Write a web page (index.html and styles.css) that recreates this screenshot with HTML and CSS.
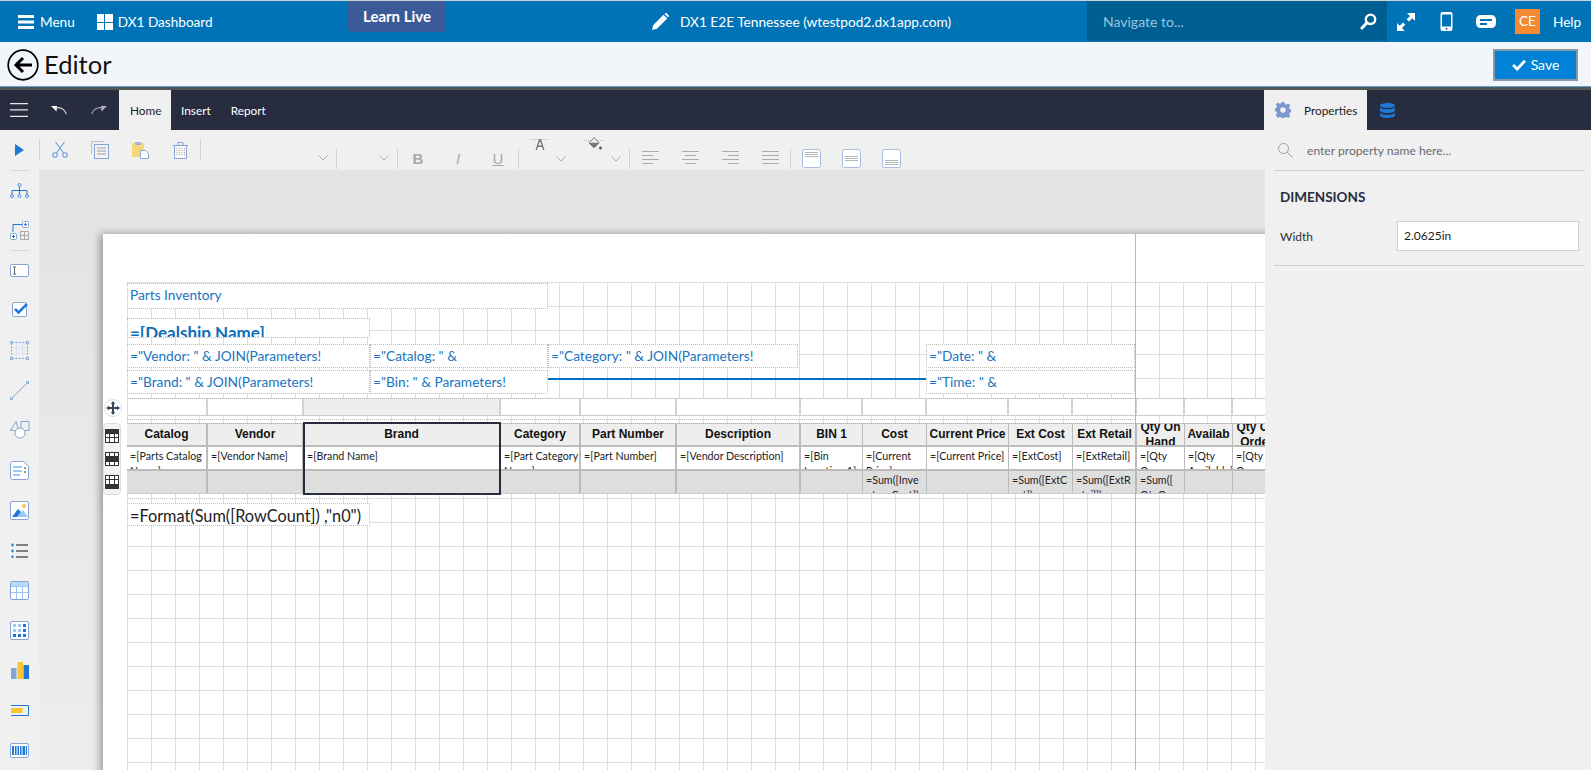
FILE: index.html
```html
<!DOCTYPE html>
<html lang="en">
<head>
<meta charset="utf-8">
<title>Editor</title>
<link rel="stylesheet" href="styles.css">
</head>
<body>
<div class="app">
  <header class="topbar">
    <div class="top-left">
      <svg class="ic-menu" width="16" height="14" viewBox="0 0 16 14"><path fill="#fff" d="M0 0h16v3H0zM0 5.500h16v3H0zM0 11h16v3H0z"/></svg>
      <span class="menu-label">Menu</span>
      <svg class="ic-win" width="16" height="16" viewBox="0 0 16 16"><path fill="#fff" d="M0 0h7v8H0zM8 0h8v8H8zM0 9h7v7H0zM8 9h8v7H8z"/></svg>
      <span class="dash-label">DX1 Dashboard</span>
    </div>
    <div class="learn">Learn Live</div>
    <div class="top-title">
      <svg width="17" height="17" viewBox="0 0 17 17"><path fill="#fff" d="M0 17l1.300-5L11.500 1.800l3.700 3.700L5 15.700zM12.500.8l.6-.5c.5-.4 1.200-.4 1.600 0l1.900 1.900c.4.500.4 1.200 0 1.600l-.5.700z"/></svg>
      <span>DX1 E2E Tennessee (wtestpod2.dx1app.com)</span>
    </div>
    <div class="nav-search">
      <span>Navigate to...</span>
      <svg width="17" height="17" viewBox="0 0 17 17"><circle cx="10.500" cy="6.300" r="4.700" fill="none" stroke="#fff" stroke-width="2.400"/><path stroke="#fff" stroke-width="3" stroke-linecap="round" d="M6.800 10L2 15"/></svg>
    </div>
    <div class="top-right">
      <svg width="18" height="18" viewBox="0 0 18 18"><path fill="#fff" d="M10 0h8v8l-2.700-2.700-3.300 3.300-2.300-2.300 3.300-3.300zM0 18v-8l2.700 2.700L6 9.400l2.300 2.300L5 15l2.700 3z"/></svg>
      <svg class="ic-phone" width="13" height="19" viewBox="0 0 12 19"><rect width="12" height="19" rx="2" fill="#fff"/><rect x="1.500" y="2.500" width="9" height="12" fill="#0073b7"/><circle cx="6" cy="16.800" r="1" fill="#0073b7"/></svg>
      <svg class="ic-chat" width="20" height="16" viewBox="0 0 20 16"><path fill="#fff" d="M5 1h10c3 0 5 2 5 5v3c0 3-2 5-5 5H5c-3 0-5-2-5-5V6c0-3 2-5 5-5z"/><path stroke="#0073b7" stroke-width="2" d="M4 6h12M4 10h7"/></svg>
      <span class="avatar">CE</span>
      <span class="help">Help</span>
    </div>
  </header>

  <div class="titlebar">
    <svg class="ic-back" width="32" height="32" viewBox="0 0 32 32"><circle cx="16" cy="16" r="14.800" fill="none" stroke="#000" stroke-width="1.700"/><path fill="none" stroke="#000" stroke-width="3" d="M25 16H9M16 9l-7 7 7 7"/></svg>
    <h1>Editor</h1>
    <button class="save"><svg width="14" height="12" viewBox="0 0 13 11"><path fill="none" stroke="#fff" stroke-width="2.600" d="M1 5.500l3.800 3.800L12 1.500"/></svg>Save</button>
  </div>

  <nav class="ribbon">
    <svg class="ic-ham" width="18" height="14" viewBox="0 0 18 14"><path fill="#e8e8e8" d="M0 0h18v1.300H0zM0 6.300h18v1.300H0zM0 12.700h18V14H0z"/></svg>
    <svg class="ic-undo" width="16" height="9" viewBox="0 0 16 9"><path fill="#fff" d="M0 0h6L5.500 5.500z"/><path fill="none" stroke="#d8d8d8" stroke-width="1.100" d="M3.500 2.500C8 .5 13 2 15.300 8"/></svg>
    <svg class="ic-redo" width="16" height="9" viewBox="0 0 16 9"><path fill="#b4b7bf" d="M16 0h-6l.5 5.500z"/><path fill="none" stroke="#9fa3ad" stroke-width="1.100" d="M12.500 2.500C8 .5 3 2 .7 8"/></svg>
    <span class="tab active home">Home</span>
    <span class="tab">Insert</span>
    <span class="tab">Report</span>
    <span class="ribbon-gap"></span>
    <span class="tab active props">
      <svg width="16" height="16" viewBox="0 0 16 16"><path fill="#7b97cf" fill-rule="evenodd" d="M6.500 0h3l.4 2.200 1.400.6L13.200 1.500l2.100 2.100-1.300 1.900.6 1.400 1.400.4v3l-1.400.4-.6 1.400 1.300 1.900-2.100 2.100-1.900-1.300-1.400.6-.4 2.100h-3l-.4-2.100-1.400-.6-1.900 1.300L.7 12.900 2 11l-.6-1.400L0 9.200V6.400l1.400-.5L2 4.500.7 2.600 2.800.5l1.900 1.300 1.400-.6zM8 5.200a2.800 2.800 0 1 0 0 5.600 2.800 2.800 0 0 0 0-5.600z"/></svg>
      <span>Properties</span>
    </span>
    <svg class="ic-db" width="15" height="15" viewBox="0 0 15 15"><path fill="#1f78d6" d="M0 2.500C0 1 3.400 0 7.500 0S15 1 15 2.500 11.600 5 7.500 5 0 4 0 2.500zM0 4.500C2 6 5 6.300 7.500 6.300S13 6 15 4.500v3C15 9 11.600 10 7.500 10S0 9 0 7.500zM0 10c2 1.500 5 1.700 7.500 1.700S13 11.500 15 10v2.500C15 14 11.600 15 7.500 15S0 14 0 12.500z"/></svg>
  </nav>

  <div class="work">
    <div class="work-left">
      <div class="toolbar">
        <span class="tool first"><svg width="9" height="12" viewBox="0 0 9 12"><path fill="#1f78d6" d="M0 0l9 6-9 6z"/></svg></span>
        <span class="tsep up"></span>
        <span class="tool"><svg width="16" height="16" viewBox="0 0 16 16" fill="none" stroke="#6f9fdc" stroke-width="1.100"><circle cx="3" cy="13" r="2.200"/><circle cx="13" cy="13" r="2.200"/><path d="M4.300 11.300L12.500 0M11.700 11.300L3.500 0"/></svg></span>
        <span class="tool"><svg width="18" height="18" viewBox="0 0 18 18" fill="none"><path stroke="#a9c2e6" d="M.5 13V.5H13"/><rect x="3.500" y="3.500" width="14" height="14" fill="#f4f4f4" stroke="#86a4d6"/><path stroke="#999" d="M6 7h9M6 10h9M6 13h9"/></svg></span>
        <span class="tool"><svg width="17" height="18" viewBox="0 0 17 18"><path fill="#f5d77c" d="M0 2h12v14H0z"/><path fill="#9fb6dc" d="M3 1h6v3H3z"/><path fill="#fff" stroke="#8ba8d8" d="M8.500 9.500h5l3 3v5h-8z"/></svg></span>
        <span class="tool"><svg width="15" height="17" viewBox="0 0 15 17" fill="none"><path stroke="#86a4d6" d="M0 3.500h15M5 3V.5h5V3"/><path stroke="#86a4d6" fill="#f8f8f8" d="M1.500 3.500h12v13h-12z"/><path stroke="#aaa" stroke-dasharray="1 1" d="M4 6v8M6.500 6v8M9 6v8M11.500 6v8"/></svg></span>
        <span class="tsep up"></span>
        <span class="combo combo-font"><svg class="chev" width="10" height="6" viewBox="0 0 10 6"><path fill="none" stroke="#a8a8a8" d="M.5.500L5 5 9.500.5"/></svg></span>
        <span class="tsep"></span>
        <span class="combo combo-size"><svg class="chev" width="10" height="6" viewBox="0 0 10 6"><path fill="none" stroke="#a8a8a8" d="M.5.500L5 5 9.500.5"/></svg></span>
        <span class="tsep"></span>
        <span class="tool fmt b">B</span>
        <span class="tool fmt i">I</span>
        <span class="tool fmt u">U</span>
        <span class="tsep"></span>
        <span class="color color-a">
          <svg width="18" height="12" viewBox="0 0 18 12"><path stroke="#bbb" stroke-dasharray="1 1" d="M0 1.500h18" fill="none"/><path fill="#777" d="M8 1h2l3.500 11H12l-.8-3H6.800L6 12H4.500zM7.300 7.500h3.400L9 3z"/></svg>
          <svg class="chev" width="10" height="6" viewBox="0 0 10 6"><path fill="none" stroke="#a8a8a8" d="M.5.500L5 5 9.500.5"/></svg>
        </span>
        <span class="color color-f">
          <svg width="20" height="13" viewBox="0 0 20 13"><path stroke="#bbb" stroke-dasharray="1 1" d="M0 3.500h20" fill="none"/><path fill="#f0f0f0" stroke="#777" d="M10 .7l5 5-5 5-5-5z"/><path fill="#777" d="M4.700 5.700h10.600L10 11z"/><circle cx="16.500" cy="11" r="1.500" fill="#555"/></svg>
          <svg class="chev" width="10" height="6" viewBox="0 0 10 6"><path fill="none" stroke="#a8a8a8" d="M.5.500L5 5 9.500.5"/></svg>
        </span>
        <span class="tsep"></span>
        <span class="tool low"><svg width="17" height="14" viewBox="0 0 17 14"><path stroke="#aaa" d="M0 .5h17M0 4.500h11M0 8.500h17M0 12.500h11"/></svg></span>
        <span class="tool low"><svg width="17" height="14" viewBox="0 0 17 14"><path stroke="#aaa" d="M0 .5h17M3 4.500h11M0 8.500h17M3 12.500h11"/></svg></span>
        <span class="tool low"><svg width="17" height="14" viewBox="0 0 17 14"><path stroke="#aaa" d="M0 .5h17M6 4.500h11M0 8.500h17M6 12.500h11"/></svg></span>
        <span class="tool low"><svg width="17" height="14" viewBox="0 0 17 14"><path stroke="#aaa" d="M0 .5h17M0 4.500h17M0 8.500h17M0 12.500h17"/></svg></span>
        <span class="tsep"></span>
        <span class="tool low box"><svg width="19" height="19" viewBox="0 0 19 19" fill="none"><rect x=".5" y=".5" width="18" height="18" rx="2" fill="#fff" stroke="#a9bbe0"/><path stroke="#b5b5b5" d="M3 3.500h13M3 5.500h13M3 7.500h13"/></svg></span>
        <span class="tool low box"><svg width="19" height="19" viewBox="0 0 19 19" fill="none"><rect x=".5" y=".5" width="18" height="18" rx="2" fill="#fff" stroke="#a9bbe0"/><path stroke="#b5b5b5" d="M3 7.500h13M3 9.500h13M3 11.500h13"/></svg></span>
        <span class="tool low box"><svg width="19" height="19" viewBox="0 0 19 19" fill="none"><rect x=".5" y=".5" width="18" height="18" rx="2" fill="#fff" stroke="#a9bbe0"/><path stroke="#b5b5b5" d="M3 11.500h13M3 13.500h13M3 15.500h13"/></svg></span>
      </div>
      <div class="stage">
        <aside class="side">
          <span class="side-item top-a"><svg width="19" height="15" viewBox="0 0 19 15" fill="none" stroke="#4b8fdc"><circle cx="9.500" cy="2" r="1.500"/><circle cx="2" cy="13" r="1.500"/><circle cx="9.500" cy="13" r="1.500"/><circle cx="17" cy="13" r="1.500"/><path stroke="#1f78d6" d="M9.500 3.500v8M2 11.500V7.500h15v4"/></svg></span>
          <span class="side-item"><svg width="19" height="19" viewBox="0 0 19 19" fill="none"><path stroke="#1f78d6" d="M3 11V3.500h9"/><rect x="12.500" y=".5" width="6" height="6" rx="1" fill="#fff" stroke="#86a4d6"/><path stroke="#1f78d6" d="M14 3.500h3M15.500 2v3"/><rect x=".5" y="12.500" width="6" height="6" rx="1" fill="#fff" stroke="#86a4d6"/><path stroke="#1f78d6" d="M2 15.500h3M3.500 14v3"/><path stroke="#aaa" d="M10.500 10.500h8v8h-8zM14.500 10.500v8M10.500 14.500h8"/></svg></span>
          <span class="side-rule"></span>
          <span class="side-item"><svg width="19" height="13" viewBox="0 0 19 13" fill="none"><rect x=".5" y=".5" width="18" height="12" rx="1.500" fill="#fff" stroke="#86a4d6"/><path stroke="#666" d="M3 3h3M3 10h3M4.500 3v7"/></svg></span>
          <span class="side-item"><svg width="16" height="16" viewBox="0 0 16 16" fill="none"><rect x=".5" y=".5" width="14" height="14" rx="1.500" fill="#fff" stroke="#86a4d6"/><path stroke="#1f78d6" stroke-width="2.500" d="M3 7l3.500 3.500L15 2"/></svg></span>
          <span class="side-item"><svg width="19" height="19" viewBox="0 0 19 19" fill="none"><path stroke="#dbe3f2" d="M6.500 2v15M12.500 2v15M2 6.500h15M2 12.500h15"/><path stroke="#86a4d6" stroke-dasharray="2 1.300" d="M2 1.500h15M2 17.500h15M1.500 2v15M17.500 2v15"/><path fill="#fff" stroke="#86a4d6" d="M.5.500h2v2h-2zM16.500.5h2v2h-2zM.5 16.500h2v2h-2zM16.500 16.500h2v2h-2z"/></svg></span>
          <span class="side-item"><svg width="19" height="19" viewBox="0 0 19 19" fill="none" stroke="#86a4d6"><path d="M2.500 16.500l14-14"/><path fill="#fff" d="M.5 16.500h2v2h-2zM16.500.5h2v2h-2z"/></svg></span>
          <span class="side-item"><svg width="20" height="18" viewBox="0 0 20 18" fill="none" stroke="#86a4d6"><path d="M6 .5L.5 9.500h8zM11 .5h8v9h-8z"/><circle cx="10" cy="12" r="5" fill="#fff"/></svg></span>
          <span class="side-item"><svg width="19" height="19" viewBox="0 0 19 19"><path fill="#fff" stroke="#86a4d6" d="M.5 2.500a2 2 0 0 1 2-2h11l5 5v11a2 2 0 0 1-2 2h-14a2 2 0 0 1-2-2z"/><path fill="#9cc8f5" d="M3 5h9v2H3zM3 9h9v2H3z"/><path fill="#999" d="M14 6h2v2h-2zM14 10h2v2h-2z"/><path fill="#9cc8f5" d="M3 13h7v2H3z"/></svg></span>
          <span class="side-item"><svg width="19" height="19" viewBox="0 0 19 19"><rect x=".5" y=".5" width="18" height="18" rx="1.500" fill="#fff" stroke="#86a4d6"/><circle cx="14" cy="5" r="2" fill="#f4c542"/><path fill="#9cc8f5" d="M7 16l6-7 5 7z"/><path fill="#1f78d6" d="M2 16l6-8 3 3-4 5z"/></svg></span>
          <span class="side-item"><svg width="18" height="15" viewBox="0 0 18 15"><path fill="#808080" d="M5 1h12v2H5zM5 7h12v2H5zM5 13h12v2H5z"/><path fill="#2a82e4" d="M1.500 0L3 2 1.500 3.800 0 2zM1.500 6L3 8 1.500 9.800 0 8zM1.500 12L3 14 1.500 15.800 0 14z"/></svg></span>
          <span class="side-item"><svg width="19" height="19" viewBox="0 0 19 19"><rect x=".5" y=".5" width="18" height="18" rx="1.500" fill="#fff" stroke="#86a4d6"/><path fill="#b7dafb" d="M1 1h17v4H1z"/><path stroke="#9cc8f5" fill="none" d="M1 5.500h17M1 11.500h17M6.500 5v13M12.500 5v13"/></svg></span>
          <span class="side-item"><svg width="19" height="19" viewBox="0 0 19 19"><rect x=".5" y=".5" width="18" height="18" rx="1.500" fill="#fff" stroke="#86a4d6"/><path fill="#9cc8f5" d="M3 3h3v3H3zM8 3h3v3H8zM3 8h3v3H3zM8 8h3v3H8z"/><path fill="#1f78d6" d="M13 3h3v3h-3zM13 8h3v3h-3zM3 13h3v3H3zM8 13h3v3H8zM13 13h3v3h-3z"/></svg></span>
          <span class="side-item"><svg width="18" height="17" viewBox="0 0 18 17"><path fill="#86a4d6" d="M0 6h5.500v11H0z"/><path fill="#f6c431" d="M6.500 0H12v17H6.500z"/><path fill="#1f78d6" d="M12.500 3H18v14h-5.500z"/></svg></span>
          <span class="side-item"><svg width="18" height="11" viewBox="0 0 18 11"><path fill="none" stroke="#1f78d6" d="M0 .5h17.500v10H0"/><path fill="#f6c431" d="M0 3h11.500v5H0z"/></svg></span>
          <span class="side-item"><svg width="19" height="15" viewBox="0 0 19 15"><rect x=".5" y=".5" width="18" height="14" rx="1.500" fill="#fff" stroke="#86a4d6"/><path fill="#1f78d6" d="M2 3h2v9H2zM5 3h1.500v9H5zM7.500 3H9v9H7.500zM10 3h1.500v9H10zM12.500 3H15v9h-2.500zM15.800 3H17v9h-1.200z"/></svg></span>
        </aside>
        <main class="canvas">
          <div class="page">
            <div class="report">
              <div class="item title-item">Parts Inventory</div>
              <div class="item dealer">=[Dealship Name]</div>
              <div class="item vendor">="Vendor: " &amp; JOIN(Parameters!</div>
              <div class="item catalog">="Catalog: " &amp;</div>
              <div class="item category">="Category: " &amp; JOIN(Parameters!</div>
              <div class="item date">="Date: " &amp;</div>
              <div class="item brand">="Brand: " &amp; JOIN(Parameters!</div>
              <div class="item bin">="Bin: " &amp; Parameters!</div>
              <div class="rule-line"></div>
              <div class="item time">="Time: " &amp;</div>
              <div class="stray">=</div>

              <div class="tcols handles">
                <span></span><span></span><span class="on"></span><span></span><span></span><span></span><span></span><span></span><span></span><span></span><span></span><span></span><span></span><span></span>
              </div>
              <div class="dots"></div>

              <div class="tablebox">
                <div class="tcols row head">
                  <span>Catalog</span><span>Vendor</span><span>Brand</span><span>Category</span><span>Part Number</span><span>Description</span><span>BIN 1</span><span>Cost</span><span>Current Price</span><span>Ext Cost</span><span>Ext Retail</span><span class="wrap">Qty On Hand</span><span>Availab</span><span class="wrap">Qty On Order</span>
                </div>
                <div class="tcols row data">
                  <span>=[Parts Catalog Name]</span><span>=[Vendor Name]</span><span>=[Brand Name]</span><span>=[Part Category Name]</span><span>=[Part Number]</span><span>=[Vendor Description]</span><span>=[Bin Location 1]</span><span>=[Current Price]</span><span>=[Current Price]</span><span>=[ExtCost]</span><span>=[ExtRetail]</span><span>=[Qty On Hand]</span><span>=[Qty Available]</span><span>=[Qty On Order]</span>
                </div>
                <div class="tcols row total">
                  <span></span><span></span><span></span><span></span><span></span><span></span><span></span><span>=Sum([InventoryCost])</span><span></span><span>=Sum([ExtCost])</span><span>=Sum([ExtRetail])</span><span>=Sum([QtyOnHand])</span><span></span><span></span>
                </div>
                <div class="selected"></div>
              </div>

              <div class="item count">=Format(Sum([RowCount]) ,"n0")</div>

              <div class="grip move">
                <svg width="14" height="14" viewBox="0 0 14 14"><path fill="#34455e" d="M7 0l2.200 3H8v3h3V4.800L14 7l-3 2.200V8H8v3h1.200L7 14l-2.200-3H6V8H3v1.200L0 7l3-2.200V6h3V3H4.800z"/></svg>
              </div>
              <div class="grip-pill">
                <svg width="14" height="14" viewBox="0 0 14 14"><rect width="14" height="14" fill="#333"/><path fill="#fff" d="M1 5h3v3H1zM5 5h4v3H5zM10 5h3v3h-3zM1 9h3v4H1zM5 9h4v4H5zM10 9h3v4h-3z"/></svg>
                <svg width="14" height="14" viewBox="0 0 14 14"><rect width="14" height="14" fill="#333"/><path fill="#fff" d="M1 1h3v3H1zM5 1h4v3H5zM10 1h3v3h-3zM1 10h3v3H1zM5 10h4v3H5zM10 10h3v3h-3z"/></svg>
                <svg width="14" height="14" viewBox="0 0 14 14"><rect width="14" height="14" fill="#333"/><path fill="#fff" d="M1 1h3v3H1zM5 1h4v3H5zM10 1h3v3h-3zM1 5h3v4H1zM5 5h4v4H5zM10 5h3v4h-3z"/></svg>
              </div>
            </div>
            <div class="page-edge"></div>
          </div>
        </main>
      </div>
    </div>

    <aside class="panel">
      <div class="prop-search">
        <svg width="15" height="15" viewBox="0 0 15 15" fill="none" stroke="#a0a0a0"><circle cx="5.500" cy="5.500" r="5"/><path d="M9 9l5.500 5.500"/></svg>
        <span>enter property name here...</span>
      </div>
      <div class="prop-group">
        <h2>DIMENSIONS</h2>
        <div class="prop-row">
          <label>Width</label>
          <div class="prop-input">2.0625in</div>
        </div>
      </div>
    </aside>
  </div>
</div>
</body>
</html>
```

FILE: styles.css
```css
* { box-sizing: border-box; }
html, body { margin: 0; padding: 0; height: 100%; overflow: hidden; }
body { font-family: "Lato", "Open Sans", sans-serif; background: #f0f0f0; color: #222; }
svg { display: block; flex: none; }
.app { width: 1591px; height: 770px; display: flex; flex-direction: column; overflow: hidden; }

/* top bar */
.topbar { height: 42px; flex: none; background: #0073b7; border-top: 1px solid #c9d3d8; display: flex; align-items: center; color: #fff; font-size: 13.600px; position: relative; }
.top-left { display: flex; align-items: center; padding-left: 18px; width: 640px; }
.menu-label { margin-left: 6px; }
.ic-win { margin-left: 22px; }
.dash-label { margin-left: 5px; }
.learn { position: absolute; left: 348px; top: 0; width: 98px; height: 31px; background: #3d5a98; border-radius: 0 0 4px 4px; font-weight: 700; font-size: 15px; text-align: center; line-height: 30px; }
.top-title { display: flex; align-items: center; gap: 11px; padding-left: 12px; width: 447px; font-size: 13.700px; }
.nav-search { width: 300px; height: 40px; align-self: flex-start; background: #005f92; display: flex; align-items: center; justify-content: space-between; padding: 0 10px 0 16px; color: #9cc4dc; font-size: 14px; }
.top-right { display: flex; align-items: center; padding-left: 10px; }
.ic-phone { margin-left: 25px; }
.ic-chat { margin-left: 23px; }
.avatar { margin-left: 19px; width: 25px; height: 25px; background: #f58a33; text-align: center; line-height: 25px; font-size: 13.500px; }
.help { margin-left: 13px; }

/* title bar */
.titlebar { height: 48px; flex: none; background: #f2f6fa; border-bottom: 3px solid #555; box-shadow: inset 0 -1px 0 #5a9fd0; display: flex; align-items: center; padding: 0 13px 0 7px; }
.titlebar h1 { font-weight: 400; font-size: 25.500px; margin: 0 0 2px 5px; color: #111; flex: 1; }
.save { width: 85px; height: 32px; border: 2px solid #8b98a3; background: #0082d6; color: #fff; font: 14px "Lato", sans-serif; display: flex; align-items: center; justify-content: center; gap: 5px; padding: 0; }

/* ribbon */
.ribbon { height: 40px; flex: none; background: #272c3f; display: flex; align-items: center; color: #fff; font-size: 11.800px; }
.ic-ham { margin-left: 10px; }
.ic-undo { margin-left: 23px; }
.ic-redo { margin-left: 24px; }
.tab { height: 40px; display: flex; align-items: center; padding: 0 10px; }
.tab.active { background: #f0f0f0; color: #222; }
.home { margin-left: 12px; width: 52px; padding: 0 11px; }
.ribbon-gap { flex: 1; }
.props { width: 103px; padding: 0 0 0 11px; gap: 13px; margin-right: 13px; }
.ic-db { margin-right: 196px; }

/* work area */
.work { flex: 1; display: flex; min-height: 0; }
.work-left { flex: 1; min-width: 0; display: flex; flex-direction: column; }
.toolbar { height: 40px; flex: none; background: #f0f0f0; display: flex; align-items: flex-start; }
.tool { width: 40px; height: 40px; display: flex; align-items: center; justify-content: center; }
.tool.first { width: 39px; }
.tool.low { align-items: flex-end; padding-bottom: 5px; }
.tool.box { padding-bottom: 2px; }
.fmt { font: 15px "Liberation Sans", sans-serif; color: #a8a8a8; padding-top: 17px; }
.fmt.b { font-weight: 700; }
.fmt.i { font-style: italic; }
.fmt.u { text-decoration: underline; }
.tsep { width: 1px; height: 20px; margin-top: 19px; background: #d0d0d0; flex: none; }
.tsep.up { margin-top: 10px; }
.combo { height: 40px; display: flex; align-items: flex-end; justify-content: flex-end; padding: 0 8px 9px 0; }
.combo-font { width: 135px; }
.combo-size { width: 60px; }
.color { width: 55px; height: 40px; position: relative; display: block; }
.color svg { position: absolute; }
.color svg:first-child { left: 12px; top: 8px; }
.color .chev { left: 37px; top: 26px; }
.color-f svg:first-child { left: 10px; top: 7px; }

/* stage */
.stage { flex: 1; display: flex; min-height: 0; }
.side { width: 39px; flex: none; background: #f0f0f0; display: flex; flex-direction: column; align-items: center; }
.side-item { height: 40px; flex: none; display: flex; align-items: center; justify-content: center; }
.side-item.top-a { border-top: 1px solid #d8d8d8; width: 20px; }
.side-rule { width: 20px; height: 1px; background: #d8d8d8; flex: none; margin-bottom: -1px; }
.canvas { flex: 1; min-width: 0; overflow: hidden; background: linear-gradient(#e3e3e3, #ededed); padding: 64px 0 0 64px; }
.page { width: 1400px; height: 800px; background: #fff; box-shadow: -3px 0 8px rgba(0,0,0,.35); position: relative; }
.page-edge { position: absolute; left: 1032px; top: 0; bottom: 0; width: 1px; background: #b8b8b8; }

/* report */
.report { position: absolute; left: 24px; top: 48px; right: 0; bottom: 0; border-top: 1px solid #ddd; background-image: linear-gradient(to right, #ddd 1px, transparent 1px), linear-gradient(to bottom, #ddd 1px, transparent 1px); background-size: 24px 24px; background-position: 0 -1px; }
.item { position: absolute; background: #fff; border: 1px dotted #bdbdbd; color: #1874c0; font-size: 13.700px; line-height: 22px; padding: 0 0 0 2px; overflow: hidden; white-space: nowrap; }
.title-item { left: 0; top: 0; width: 421px; height: 26px; }
.dealer { left: 0; top: 35px; width: 243px; height: 20px; font-weight: 700; font-size: 17px; line-height: 28px; color: #0c6cb8; }
.vendor { left: 0; top: 61px; width: 243px; height: 24px; }
.catalog { left: 243px; top: 61px; width: 178px; height: 24px; }
.category { left: 421px; top: 61px; width: 250px; height: 24px; }
.date { left: 799px; top: 61px; width: 209px; height: 24px; }
.brand { left: 0; top: 87px; width: 243px; height: 24px; }
.bin { left: 243px; top: 87px; width: 178px; height: 24px; }
.time { left: 799px; top: 87px; width: 209px; height: 24px; }
.rule-line { position: absolute; left: 421px; top: 95px; width: 378px; height: 2px; background: #0070c0; }
.stray { position: absolute; left: 3px; top: 112px; width: 8px; height: 2px; font-size: 14px; line-height: 6px; color: #333; overflow: hidden; }
.tcols { display: grid; grid-template-columns: 81px 96px 197px 80px 96px 124px 62px 64px 82px 64px 64px 48px 48px 48px; }
.handles { position: absolute; left: 0; top: 115px; height: 18px; border: 1px solid #ccc; border-left: 0; border-radius: 3px 0 0 3px; background: #fff; }
.handles span { border-right: 2px solid #d2d2d2; }
.handles span:first-child { border-left: 1px solid #ddd; }
.handles .on { background: #eee; }
.dots { position: absolute; left: 0; top: 136px; width: 1008px; border-top: 1px dotted #bbb; }
.tablebox { position: absolute; left: 0; top: 140px; }
.row { font-size: 10.700px; color: #222; }
.row span { overflow: hidden; border-right: 1px solid #bbb; padding: 1px 0 0 3px; line-height: 15px; }
.row span:nth-child(-n+6) { border-right-width: 2px; }
.row span:nth-child(n+8) { padding-right: 3px; }
.row span:nth-child(n+12) { padding-right: 5px; }
.row.head { height: 24px; border-top: 1px solid #c0c0c0; border-bottom: 2px solid #bbb; background: #eee; font: 700 12px/21px "Liberation Sans", sans-serif; color: #111; text-align: center; }
.row.head span { padding: 0 1px; line-height: 21px; white-space: nowrap; }
.row.head .wrap { white-space: normal; line-height: 15px; display: flex; align-items: center; justify-content: center; }
.row.data { height: 24px; border-bottom: 2px solid #bbb; background: #fff; }
.row.total { height: 23px; background: #dedede; border-bottom: 1px solid #ccc; }
.row.total span { overflow-wrap: anywhere; }
.selected { position: absolute; left: 176px; top: -1px; width: 198px; height: 73px; border: 2px solid #272c3f; }
.count { left: 0; top: 220px; width: 243px; height: 23px; font-size: 16.300px; line-height: 24px; color: #222; }
.grip { position: absolute; left: -23px; top: 116px; width: 18px; height: 18px; border-radius: 50%; background: #fff; border: 1px solid #ddd; display: flex; align-items: center; justify-content: center; }
.grip-pill { position: absolute; left: -24px; top: 140px; width: 18px; height: 72px; background: #f3f3f3; border: 1px solid #ddd; border-radius: 4px; display: flex; flex-direction: column; align-items: center; justify-content: space-around; }

/* right panel */
.panel { width: 326px; flex: none; background: #f0f0f0; padding: 0 6px 0 9px; }
.prop-search { height: 41px; border-bottom: 1px solid #d0d0d0; display: flex; align-items: center; padding: 0 0 0 4px; font-size: 12.100px; color: #6a6a6a; gap: 14px; }
.prop-group { border-bottom: 1px solid #d0d0d0; height: 95px; padding: 17px 6px 0; }
.prop-group h2 { margin: 0; font-size: 13.500px; font-weight: 700; color: #272c3f; line-height: 18px; }
.prop-row { display: flex; align-items: center; margin-top: 15px; font-size: 12px; color: #333; }
.prop-row label { width: 117px; }
.prop-input { width: 182px; height: 30px; background: #fff; border: 1px solid #d0d0d0; padding-left: 6px; line-height: 28px; color: #222; }
```
